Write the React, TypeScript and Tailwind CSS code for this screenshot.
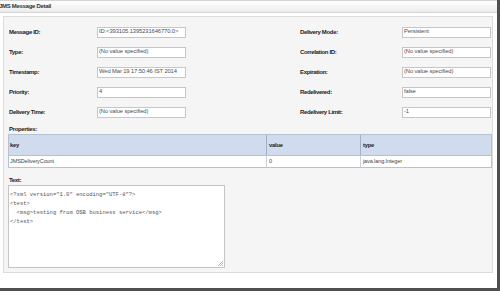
import React from "react";

const FIELDS: [string, string, string, string][] = [
  ["Message ID:", "ID:<393105.1395231646770.0>", "Delivery Mode:", "Persistent"],
  ["Type:", "(No value specified)", "Correlation ID:", "(No value specified)"],
  ["Timestamp:", "Wed Mar 19 17:50:46 IST 2014", "Expiration:", "(No value specified)"],
  ["Priority:", "4", "Redelivered:", "false"],
  ["Delivery Time:", "(No value specified)", "Redelivery Limit:", "-1"],
];

const XML = `<?xml version="1.0" encoding="UTF-8"?>
<test>
  <msg>testing from OSB business service</msg>
</test>`;

function Label({ children }: { children: React.ReactNode }) {
  return (
    <span className="text-[6px] font-bold tracking-[-0.35px] text-[#222]">
      {children}
    </span>
  );
}

function Field({ value }: { value: string }) {
  return (
    <div className="flex h-[11px] w-[89px] items-center border border-[#c6c6c6] bg-white pl-[1px] text-[5.8px] leading-none tracking-[-0.1px] text-[#4c4c58]">
      {value}
    </div>
  );
}

export default function App() {
  return (
    <div
      className="h-[294px] w-[500px] overflow-hidden bg-white"
      style={{ fontFamily: '"Liberation Sans", Arial, sans-serif' }}
    >
      <div className="flex h-[291px] w-[500px] flex-col border-r-[3px] border-b-[3px] border-[#4f4f4f] bg-white">
        <div className="flex h-[13px] items-center border-b border-t border-[#d4d4d4] bg-gradient-to-b from-white to-[#ececec]">
          <span className="-ml-[1px] text-[6px] font-bold tracking-[-0.3px] text-[#333]">
            JMS Message Detail
          </span>
        </div>

        <div className="pt-[3px] pl-[3px] pr-[4px]">
          <div className="flex h-[257px] flex-col border border-[#dcdcdc] bg-[#f5f5f5] px-[4px] pt-[5px]">
            <div className="grid grid-cols-[88px_89px_114px_102px_89px] pl-[1px]">
              {FIELDS.map(([l1, v1, l2, v2]) => (
                <React.Fragment key={l1}>
                  <div className="flex h-[20px] items-center">
                    <Label>{l1}</Label>
                  </div>
                  <div className="flex h-[20px] items-center">
                    <Field value={v1} />
                  </div>
                  <div />
                  <div className="flex h-[20px] items-center">
                    <Label>{l2}</Label>
                  </div>
                  <div className="flex h-[20px] items-center">
                    <Field value={v2} />
                  </div>
                </React.Fragment>
              ))}
            </div>

            <div className="mt-[3px] flex h-[9px] items-center pl-[1px]">
              <Label>Properties:</Label>
            </div>
            <div className="w-[484px] border border-[#b5c2d6]">
              <div className="grid h-[20px] grid-cols-[257px_94px_1fr] bg-[#d0dcee] text-[5.8px] font-bold tracking-[-0.2px] text-[#222]">
                <div className="flex items-center pl-[1px]">key</div>
                <div className="flex items-center border-l border-[#9fb0c8] pl-[2px]">value</div>
                <div className="flex items-center border-l border-[#9fb0c8] pl-[2px]">type</div>
              </div>
              <div className="grid h-[12px] grid-cols-[257px_94px_1fr] border-t border-[#b5c2d6] bg-white text-[5.5px] tracking-[-0.1px] text-[#444]">
                <div className="flex items-center pl-[1px]">JMSDeliveryCount</div>
                <div className="flex items-center border-l border-[#c8d2e0] pl-[2px]">0</div>
                <div className="flex items-center border-l border-[#c8d2e0] pl-[2px]">java.lang.Integer</div>
              </div>
            </div>

            <div className="mt-[8px] flex h-[9px] items-center pl-[1px]">
              <Label>Text:</Label>
            </div>
            <div className="relative h-[83px] w-[217px] border border-[#c4c4c4] bg-white pl-[1px] pt-[4px]">
              <pre
                className="text-[5.5px] leading-[9px] text-[#555]"
                style={{ fontFamily: '"Liberation Mono", "Courier New", monospace' }}
              >
                {XML}
              </pre>
              <svg
                className="absolute bottom-[1px] right-[1px]"
                width="5"
                height="5"
                viewBox="0 0 5 5"
              >
                <path d="M5 0 L0 5 M5 2 L2 5 M5 4 L4 5" stroke="#9a9a9a" strokeWidth="0.7" />
              </svg>
            </div>
          </div>
        </div>
      </div>
    </div>
  );
}
